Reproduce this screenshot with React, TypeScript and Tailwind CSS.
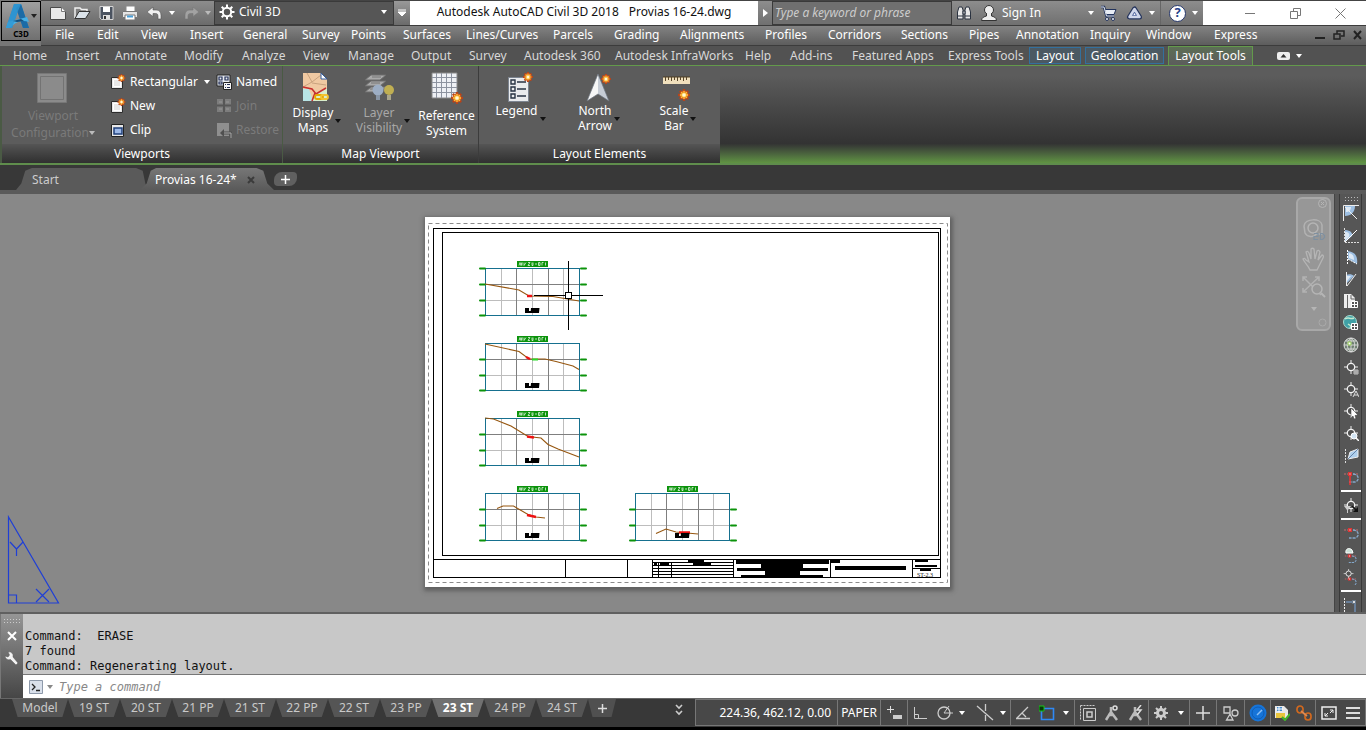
import React from "react";

const menus = [
  ["File", "w-[42px]"], ["Edit", "w-[44px]"], ["View", "w-[49px]"], ["Insert", "w-[53px]"], ["General", "w-[59px]"],
  ["Survey", "w-[49px]"], ["Points", "w-[52px]"], ["Surfaces", "w-[63px]"], ["Lines/Curves", "w-[87px]"], ["Parcels", "w-[61px]"],
  ["Grading", "w-[66px]"], ["Alignments", "w-[85px]"], ["Profiles", "w-[63px]"], ["Corridors", "w-[73px]"], ["Sections", "w-[68px]"],
  ["Pipes", "w-[47px]"], ["Annotation", "w-[74px]"], ["Inquiry", "w-[56px]"], ["Window", "w-[68px]"], ["Express", "w-[60px]"],
];

const ribbonTabs = [
  ["Home", "w-[53px]"], ["Insert", "w-[49px]"], ["Annotate", "w-[69px]"], ["Modify", "w-[58px]"], ["Analyze", "w-[61px]"],
  ["View", "w-[45px]"], ["Manage", "w-[63px]"], ["Output", "w-[58px]"], ["Survey", "w-[55px]"], ["Autodesk 360", "w-[91px]"],
  ["Autodesk InfraWorks", "w-[130px]"], ["Help", "w-[45px]"], ["Add-ins", "w-[62px]"], ["Featured Apps", "w-[96px]"], ["Express Tools", "w-[81px]"],
];

const layoutTabs = ["19 ST", "20 ST", "21 PP", "21 ST", "22 PP", "22 ST", "23 PP", "23 ST", "24 PP", "24 ST"];

function Caret({ className = "" }: { className?: string }) {
  return (
    <svg viewBox="0 0 6 4" className={`h-1 w-1.5 shrink-0 ${className}`} fill="currentColor" aria-hidden="true">
      <path d="M0 0h6L3 4z" />
    </svg>
  );
}

function Burst({ x, y, r = 6 }: { x: number; y: number; r?: number }) {
  return (
    <g transform={`translate(${x} ${y}) scale(${r / 6})`}>
      <path d="M-6 0H6M0-6V6M-4.2-4.2 4.2 4.2M4.2-4.2-4.2 4.2" stroke="#b5441c" strokeWidth="2.4" />
      <circle r="4.4" fill="#d9601c" />
      <path d="M-4 0H4M0-4V4M-2.8-2.8 2.8 2.8M2.8-2.8-2.8 2.8" stroke="#ffc83d" strokeWidth="1.3" />
      <circle r="1.8" fill="#fff8d8" />
    </g>
  );
}

function Svg({ w, h, children, className = "" }: { w: number; h: number; children: React.ReactNode; className?: string }) {
  return (
    <svg width={w} height={h} viewBox={`0 0 ${w} ${h}`} className={`shrink-0 ${className}`} fill="none" aria-hidden="true">
      {children}
    </svg>
  );
}

function QuickAccess() {
  return (
    <div className="flex h-6 w-[173px] items-center bg-linear-to-b from-[#8d8d8d] to-[#6b6b6b] pl-2 text-white">
      <button aria-label="New" className="w-6">
        <Svg w={18} h={18}><path d="M1.500 3.500h11l4 4v8h-15z" fill="#e9e9e9" stroke="#4a4a4a" /><path d="M12.500 3.500v4h4" fill="#fff" stroke="#777" /></Svg>
      </button>
      <button aria-label="Open" className="w-6">
        <Svg w={18} h={18}><path d="M2 14V4h5l1.500 1.500H14V8" stroke="#f0f0f0" strokeWidth="1.500" /><path d="m2 14.500 4-7h11l-4.500 7z" fill="#dbe3ea" stroke="#333" /></Svg>
      </button>
      <button aria-label="Save" className="w-6">
        <Svg w={18} h={18}><path d="M3 2.500h13v13H4.500L3 14z" fill="#4b5360" stroke="#d5d5d5" /><path d="M6 3h7v5H6z" fill="#fff" /><path d="M6 11h7v4H6z" fill="#ddd" /><path d="M7 12h2v3H7z" fill="#333" /></Svg>
      </button>
      <button aria-label="Plot" className="w-6">
        <Svg w={18} h={18}><path d="M5 2h9v6H5z" fill="#fff" stroke="#888" /><path d="M1.500 7.500h15v6h-15z" fill="#e4e4e4" stroke="#777" /><path d="M4 11h10v5H4z" fill="#fff" stroke="#777" /><path d="M6 12.500h6" stroke="#4a9fd8" strokeWidth="2" /></Svg>
      </button>
      <button aria-label="Undo" className="w-6">
        <Svg w={18} h={18}><path d="m2 8 6-5v3h3c3.500 0 5 2 5 5.500V15h-3v-2.500c0-2-.5-3-2.500-3H8v3z" fill="#f0f0f0" stroke="#555" strokeWidth=".6" /></Svg>
      </button>
      <Caret className="mr-2" />
      <button aria-label="Redo" className="w-[22px] text-[#a2a2a2]">
        <Svg w={18} h={18}><path d="m16 8-6-5v3H7c-3.500 0-5 2-5 5.500V15h3v-2.500c0-2 .5-3 2.500-3H10v3z" fill="currentColor" stroke="#777" strokeWidth=".6" /></Svg>
      </button>
      <Caret className="text-[#bbb]" />
    </div>
  );
}

function TitleBar() {
  return (
    <div className="flex h-[25px] items-start border-t border-[#444] bg-white text-[12px]">
      <QuickAccess />
      <div className="flex h-6 w-[180px] items-center gap-1 border border-[#3a3a3a] bg-[#565656] pb-0.5 pl-1 pr-1.5 text-white">
        <Svg w={16} h={16}><circle cx="8" cy="8" r="4.200" stroke="#fff" strokeWidth="2" /><path d="M8 .5v3M8 12.500v3M.5 8h3M12.500 8h3M2.700 2.700l2 2M11.300 11.300l2 2M13.300 2.700l-2 2M4.700 11.300l-2 2" stroke="#fff" strokeWidth="2" /></Svg>
        <button className="flex flex-1 items-center justify-between">Civil 3D<Caret /></button>
      </div>
      <button aria-label="Customize toolbar" className="flex h-6 w-4 items-center justify-center bg-linear-to-b from-[#999] to-[#6b6b6b]">
        <Svg w={8} h={8}><path d="M0 1h8M0 3h8L4 7z" stroke="#fff" fill="#fff" strokeWidth="1" /></Svg>
      </button>
      <div className="flex h-6 flex-1 items-center justify-center gap-2.5 whitespace-nowrap pb-0.5 text-[#111]">
        <span>Autodesk AutoCAD Civil 3D 2018</span><span>Provias 16-24.dwg</span>
      </div>
      <div className="flex h-6 items-center bg-linear-to-b from-[#8d8d8d] to-[#707070] text-white">
        <button aria-label="Collapse search" className="flex w-3.5 justify-center"><Svg w={5} h={8}><path d="M0 0v8l5-4z" fill="#fff" /></Svg></button>
        <input aria-label="Search" placeholder="Type a keyword or phrase" className="h-6 w-[180px] border border-[#3a3a3a] bg-[#707070] px-0.5 pb-0.5 italic text-white outline-none placeholder:text-[#ccc]" />
        <button aria-label="Find" className="flex w-6 justify-center">
          <Svg w={16} h={16}><path d="M3 2h3l1 3v9H1.500V7zM10 2h3l1.500 5v7H9V5z" fill="#e8e8e8" stroke="#2b3340" /><path d="M7 6h2v3H7z" fill="#e8e8e8" stroke="#2b3340" /><path d="M1.500 11H7M9 11h5.500" stroke="#2b3340" /></Svg>
        </button>
        <button className="flex w-[118px] items-center gap-1 pl-1">
          <Svg w={18} h={18}><circle cx="9" cy="6" r="4.500" fill="#eee" stroke="#333" /><path d="M1.500 16.500c0-3 3-4 5-4.500V9.500h5V12c2 .5 5 1.500 5 4.500z" fill="#eee" stroke="#333" /><path d="M7 9h4v3H7z" fill="#eee" /></Svg>
          <span className="flex-1 text-left">Sign In</span><Caret />
        </button>
        <button aria-label="App store" className="flex w-7 justify-center">
          <Svg w={17} h={17}><path d="M1 2h3l2.500 9H14" stroke="#22335c" strokeWidth="2.600" /><path d="M4.500 4.500H16l-2 5H6z" fill="#e8edf5" stroke="#22335c" /><path d="M1 2h3l2.500 9H14" stroke="#dfe6f0" strokeWidth="1" /><circle cx="7" cy="14" r="1.500" fill="#fff" stroke="#22335c" /><circle cx="13" cy="14" r="1.500" fill="#fff" stroke="#22335c" /></Svg>
        </button>
        <button aria-label="Autodesk 360" className="flex w-[38px] items-center gap-1.5 pl-1">
          <Svg w={17} h={16}><path d="m8.500 4-5 8h10z" fill="#5568a0" stroke="#25345c" strokeWidth="5" strokeLinejoin="round" /><path d="m8.500 4-5 8h10z" fill="#5568a0" stroke="#cfd6ea" strokeWidth="2.500" strokeLinejoin="round" /><path d="m8.500 8-1 2h2z" fill="#fff" /></Svg><Caret />
        </button>
        <button aria-label="Help" className="flex h-6 w-[43px] items-center gap-1.5 border-l border-[#666] pl-2">
          <span className="flex size-[17px] items-center justify-center rounded-full border border-[#26376b] bg-white text-[13px] font-bold text-[#26428b]">?</span><Caret />
        </button>
      </div>
      <div className="flex h-6 w-[163px] items-center justify-between pl-[42px] pr-5 text-[#777]">
        <button aria-label="Minimize"><Svg w={10} h={10}><path d="M0 5.500h10" stroke="currentColor" /></Svg></button>
        <button aria-label="Restore"><Svg w={11} h={11}><path d="M.5 3.500h7v7h-7zM3.500 3V.5h7v7H8" stroke="currentColor" /></Svg></button>
        <button aria-label="Close"><Svg w={11} h={11}><path d="m.5.5 10 10M10.500.5l-10 10" stroke="currentColor" /></Svg></button>
      </div>
    </div>
  );
}

function Header() {
  return (
    <header className="flex h-[46px] bg-[#777]">
      <button aria-label="Application menu" className="my-px ml-px flex h-10 w-10 shrink-0 flex-col items-center border border-black bg-linear-to-b from-[#a0a0a0] to-[#707070]">
        <span className="flex items-center">
          <Svg w={26} h={28}>
            <path d="M9 2h7l8 24h-6L13 9 7 26H1z" fill="#2789c7" />
            <path d="m16 2 8 24h-6L11 6z" fill="#1b6ba6" />
            <path d="M3 20 22 15l2 5c-6-2-12-1-17 4l-3 2H1z" fill="#47b0e6" />
            <path d="M9 2h7l-3 7L7 26H1z" fill="#3097d3" opacity=".8" />
            <path d="m8 19 8-2 3 2-7 1z" fill="#164f7c" />
          </Svg>
          <Caret className="text-[#222]" />
        </span>
        <span className="text-[8px] font-bold leading-[8px] text-black">C3D</span>
      </button>
      <div className="flex min-w-0 flex-1 flex-col">
        <TitleBar />
        <nav className="flex h-[21px] items-center border-b border-t border-[#3c3c3c] bg-linear-to-b from-[#838383] to-[#5d5d5d] pb-0.5 pl-3.5 text-[12px] text-white">
          {menus.map(([name, w]) => (
            <button key={name} className={`shrink-0 whitespace-nowrap text-left ${w}`}>{name}</button>
          ))}
          <div className="ml-auto flex items-center gap-2 pr-1 text-[#222]">
            <button aria-label="Minimize drawing"><Svg w={10} h={10}><path d="M0 8h10" stroke="currentColor" strokeWidth="2" /></Svg></button>
            <button aria-label="Restore drawing"><Svg w={12} h={10}><path d="M1 4h6v5H1zM4 4V1h7v5H8" stroke="currentColor" strokeWidth="1.500" /></Svg></button>
            <button aria-label="Close drawing"><Svg w={9} h={10}><path d="m1 1 7 8M8 1 1 9" stroke="currentColor" strokeWidth="2" /></Svg></button>
          </div>
        </nav>
      </div>
    </header>
  );
}

function RibbonTabs() {
  return (
    <div className="flex h-5 items-center border-b border-[#639a4b] bg-[#525252] pl-[13px] text-[12px] text-[#d8d8d8]">
      {ribbonTabs.map(([name, w]) => (
        <button key={name} className={`shrink-0 whitespace-nowrap text-left ${w}`}>{name}</button>
      ))}
      <button className="mr-1 h-[17px] w-[52px] border border-[#33709d] bg-[#4b5963] leading-[14px] text-white">Layout</button>
      <button className="mr-1 h-[17px] w-[79px] whitespace-nowrap border border-[#33709d] bg-[#4b5963] leading-[14px] text-white">Geolocation</button>
      <button className="h-[19px] w-[85px] whitespace-nowrap border border-b-0 border-[#639a4b] bg-linear-to-b from-[#5c6e55] to-[#5c5c5c] text-white">Layout Tools</button>
      <button aria-label="Ribbon display" className="ml-6 flex items-center gap-1.5 text-white">
        <Svg w={13} h={8}><rect width="13" height="8" rx="2" fill="#eee" /><path d="m3.500 5.500 3-3.500 3 3.500z" fill="#333" /></Svg><Caret />
      </button>
    </div>
  );
}

function SheetIcon({ kind }: { kind: "new" | "clip" | "named" | "join" | "restore" }) {
  return (
    <Svg w={16} h={16}>
      {kind === "new" && <><path d="M1.500 3.500h11v11h-11z" fill="#e8e8e8" stroke="#2c2c2c" /><path d="M3.500 5.500h7v7h-7z" stroke="#fff" /><Burst x={11.5} y={4} r={4} /></>}
      {kind === "clip" && <><path d="M1.500 2.500h12v12h-12z" fill="#e8e8e8" stroke="#222" /><path d="M4 6h8v6H4z" fill="#9cb8e8" stroke="#1f3f7a" strokeWidth="1.500" /></>}
      {kind === "named" && <><path d="M1 1h13v11H1z" fill="#e8ecf2" stroke="#222" /><path d="M3 3h3v3H3zM9 3h3v3H9zM3 8h3v2H3z" stroke="#222e55" strokeWidth="1.200" /><path d="M7.500 8.500h8v7h-8z" fill="#f5f5f5" stroke="#222" /><path d="M9 10.500h1M11 10.500h3M9 13.500h1M11 13.500h3" stroke="#222e55" /></>}
      {kind === "join" && <><path d="M1 1h14v13H1z" fill="#7d7d7d" /><path d="M1 7.500h14M8 1v13" stroke="#575757" strokeWidth="2" /><path d="M3 4h3M10 4h3M3 11h3M10 11h3" stroke="#999" /></>}
      {kind === "restore" && <><path d="M1 1h12v13H1z" fill="#8f8f8f" /><path d="m4 11 4-4v8z" fill="#505050" /><path d="M7 11h8v5" stroke="#505050" strokeWidth="3" /><path d="M8 11h7v5" stroke="#aaa" /></>}
    </Svg>
  );
}

function SmallTool({ kind, label, disabled, caret }: { kind: "new" | "clip" | "named" | "join" | "restore"; label: string; disabled?: boolean; caret?: boolean }) {
  return (
    <button disabled={disabled} className="flex h-6 items-center gap-1 text-white disabled:text-[#7b7b7b]">
      <SheetIcon kind={kind} /><span className="whitespace-nowrap">{label}</span>{caret && <Caret className="ml-0.5" />}
    </button>
  );
}

function PanelTitle({ children }: { children: string }) {
  return <div className="h-[19px] bg-linear-to-b from-[#555] to-[#303030] text-center leading-[20px] text-white">{children}</div>;
}

function BigTool({ icon, lines, width, disabled, caret = true, low }: { icon: React.ReactNode; lines: string[]; width: string; disabled?: boolean; caret?: boolean; low?: boolean }) {
  return (
    <button disabled={disabled} className={`flex shrink-0 flex-col items-center text-white disabled:text-[#a8a8a8] ${low ? "gap-1" : ""} ${width}`}>
      {icon}
      <span className="relative block whitespace-nowrap text-center leading-[15px]">
        {lines.map((l) => <span key={l} className="block">{l}</span>)}
        {caret && <Caret className="absolute -right-2 top-3.5 text-[#111]" />}
      </span>
    </button>
  );
}

function Ribbon() {
  return (
    <section aria-label="Ribbon" className="flex h-[99px] border-b-2 border-[#5f8d4c] bg-linear-to-b from-[#5c5c5c] from-10% via-[#333] via-80% to-[#609442] text-[12px]">
      <div className="flex w-[283px] flex-col border-l-2 border-r border-[#4a5a44] bg-[#5c5c5c]">
        <div className="flex flex-1 pt-1">
          <button disabled className="flex w-[98px] flex-col items-center gap-0.5 pl-1 text-[#7a7a7a]">
            <Svg w={32} h={36}><path d="M.5 3.500h29v29H.5z" fill="#8b8b8b" stroke="#777" /><path d="M3.500 6.500h23v23h-23z" stroke="#737373" /></Svg>
            <span className="leading-[15px]">Viewport</span>
            <span className="flex items-center leading-[15px]">Configuration<Caret className="text-[#bbb]" /></span>
          </button>
          <div className="ml-2.5 w-[106px]">
            <SmallTool kind="new" label="Rectangular" caret />
            <SmallTool kind="new" label="New" />
            <SmallTool kind="clip" label="Clip" />
          </div>
          <div>
            <SmallTool kind="named" label="Named" />
            <SmallTool kind="join" label="Join" disabled />
            <SmallTool kind="restore" label="Restore" disabled />
          </div>
        </div>
        <PanelTitle>Viewports</PanelTitle>
      </div>
      <div className="flex w-[196px] flex-col border-r border-[#3c3c3c] bg-[#5c5c5c]">
        <div className="flex flex-1 pt-1.5">
          <BigTool width="w-[60px]" lines={["Display", "Maps"]} icon={
            <Svg w={32} h={33}><path d="M6 1h18l6 6v22H6z" fill="#f0c9a2" /><path d="M6 17h6l4 12H6z" fill="#b8e4e5" /><path d="m18 22 12-6v13H15z" fill="#d8eecb" /><path d="m10 1 5 9-9 5m9-5 9-7M15 11l14 2" stroke="#c9a27e" /><path d="m6 15 9 2 4 5 10-6M18 21l-3 8" stroke="#c62f2f" strokeWidth="1.600" /><path d="M24 1v6h6z" fill="#fff" stroke="#315a9b" /><rect x="18" y="23" width="8" height="4" rx="2" stroke="#e5a900" strokeWidth="1.800" /><rect x="24" y="23" width="7" height="4" rx="2" stroke="#f4c430" strokeWidth="1.800" /></Svg>} />
          <BigTool width="w-[72px]" disabled lines={["Layer", "Visibility"]} icon={
            <Svg w={32} h={33}><path d="M8 3h15l-6 5H2zM8 9h15l-6 5H2zM8 15h15l-6 5H2z" fill="#a9a9a9" stroke="#6d6d6d" /><path d="M9 5h9M8 11h9M7 17h9" stroke="#777" /><circle cx="15" cy="18" r="5.500" fill="#9daec4" /><path d="M13 23h4v5h-4z" fill="#8996a6" /><circle cx="26" cy="18" r="5" fill="#c0af52" /><path d="M24 23h4v5h-4z" fill="#aaa68b" /></Svg>} />
          <BigTool width="w-[63px]" low lines={["Reference", "System"]} caret={false} icon={
            <Svg w={32} h={32}><path d="M1 1h25v25H1z" fill="#eef0f5" stroke="#888" /><path d="M5.500 1v25M10.500 1v25M15.500 1v25M20.500 1v25M1 5.500h25M1 10.500h25M1 15.500h25M1 20.500h25" stroke="#8d93a0" /><Burst x={26} y={26} r={6} /></Svg>} />
        </div>
        <PanelTitle>Map Viewport</PanelTitle>
      </div>
      <div className="flex w-[241px] flex-col bg-[#5c5c5c]">
        <div className="flex flex-1 pl-0.5 pt-1">
          <BigTool width="w-[71px]" lines={["Legend"]} icon={
            <Svg w={32} h={33}><path d="M7.500 7.500h20v24h-20z" fill="#e9ebee" stroke="#7c8490" /><path d="M10 10h4v4h-4zM10 17h4v4h-4zM10 24h4v4h-4z" stroke="#273344" strokeWidth="1.400" /><path d="M16 12h9M16 19h9M16 26h9" stroke="#273344" strokeWidth="1.400" /><Burst x={27} y={7} r={5} /></Svg>} />
          <BigTool width="w-[86px]" lines={["North", "Arrow"]} icon={
            <Svg w={32} h={33}><path d="M19 4 8 31l11-7z" fill="#f6f6f6" /><path d="m19 4 11 27-11-7z" fill="#c6ccd5" /><path d="M19 4 8 31l11-7 11 7z" stroke="#6c7480" strokeWidth=".7" /><Burst x={27} y={9} r={5} /></Svg>} />
          <BigTool width="w-[72px]" lines={["Scale", "Bar"]} icon={
            <Svg w={36} h={33}><path d="M7 7h27v7H7z" fill="#f0e0bd" /><path d="M7 7h27" stroke="#4a3b21" /><path d="M9.500 7v4M12.500 7v3M15.500 7v4M18.500 7v3M21.500 7v4M24.500 7v3M27.500 7v4M30.500 7v3" stroke="#5a472a" /><Burst x={28} y={25} r={6} /></Svg>} />
        </div>
        <PanelTitle>Layout Elements</PanelTitle>
      </div>
    </section>
  );
}

function DocumentTabs() {
  return (
    <div className="flex h-[29px] items-end border-b-4 border-[#5a5a5a] bg-[#383838] pl-4 text-[12px]">
      <button className="h-[22px] w-[132px] bg-[#5a5a5a] pl-4 pt-0.5 text-left text-[#ccc] [clip-path:polygon(0_100%,4%_70%,7%_12%,12%_0,91%_0,96%_12%,98%_70%,100%_100%)]">Start</button>
      <div className="-ml-2 flex h-[22px] w-[134px] items-center bg-linear-to-b from-[#777] to-[#5a5a5a] pt-0.5 text-white [clip-path:polygon(0_100%,5%_70%,8%_12%,12%_0,87%_0,92%_12%,95%_70%,100%_100%)]">
        <button className="w-[107px] pl-[15px] text-left">Provias 16-24*</button>
        <button aria-label="Close Provias 16-24" className="text-[#3b3b3b]"><Svg w={8} h={8}><path d="m1 1 6 6M7 1 1 7" stroke="currentColor" strokeWidth="2" /></Svg></button>
      </div>
      <button aria-label="New drawing tab" className="mb-1 flex h-[14px] w-[23px] items-center justify-center rounded-lg rounded-tr-sm rounded-bl-sm bg-[#606060] text-white">
        <Svg w={9} h={9}><path d="M4.500 0v9M0 4.500h9" stroke="currentColor" strokeWidth="1.500" /></Svg>
      </button>
    </div>
  );
}

interface Section { x: number; y: number; line: string; top?: boolean; mark: string; green?: string }

const sections: Section[] = [
  { x: 485, y: 268, top: true, line: "0,16 34,22 44,28 68,28.5 94,33", mark: "M42 28h5" },
  { x: 485, y: 343, line: "0,1 34,8.5 44,16 60,16 71,18.500 88,23 94,26.500", mark: "M41 14l4 2", green: "M47 16.500h6" },
  { x: 485, y: 418, line: "0,0 8.500,1 26,8 43,18.500 56,20 63,26.500 73,31 94,39", mark: "M42 18.500l7 1" },
  { x: 485, y: 493, line: "12,15.500 18,13 28.500,13 43,21.500 51,24 60,25", mark: "M42 22l9 2" },
  { x: 635, y: 493, line: "21,40.500 31,36 41,39 63,41", mark: "M44 39.500h11" },
];

function CrossSection({ x, y, line, top, mark, green }: Section) {
  return (
    <g transform={`translate(${x} ${y})`}>
      <path d="M32-7h31v6H32z" fill="#0b930b" />
      <path d="M34-2.500l1-3 1 3 1-3v3M39-5.500v3l2-3M43-5.500h2l-2 3h2M47-5.500v3h1v-3M50-4h2M53.500-5.500v3h1.500v-3zM57-2.500v-3h1.500M60.500-5.500v3" stroke="#e2f5e2" strokeWidth=".8" />
      <path d="M16.500 0v47M47.500 0v47M78.500 0v47M0 32.500h94" stroke="#bdbdbd" shapeRendering="crispEdges" />
      <path d="M31.500 0v47M63.500 0v47M0 16.500h94" stroke="#7f7f7f" shapeRendering="crispEdges" />
      <path d="M.5.5h94v47H.5z" fill="none" stroke="#16708f" shapeRendering="crispEdges" />
      <path d={`${top ? "M-5 .5h5M96 .5h5" : ""}M-5 16.500h5M96 16.500h5M-5 32.500h5M96 32.500h5M-5 47.500h5M96 47.500h5`} stroke="#0b930b" strokeWidth="2" strokeLinecap="round" />
      <polyline points={line} fill="none" stroke="#96560f" strokeWidth="1.100" />
      <path d={mark} stroke="#ee1111" strokeWidth="2.500" />
      {green && <path d={green} stroke="#28d828" strokeWidth="2" />}
      <path d="M40 40h4v5h-4zM44 43h2v2h-2zM46 40h8.500l-.5 5h-8.500z" fill="#000" />
    </g>
  );
}

function DrawingSheet() {
  return (
    <svg viewBox="425 217 525 370" role="img" aria-label="Cross section sheet" className="absolute left-[425px] top-[23px] h-[370px] w-[525px] bg-white shadow-[1px_2px_4px_2px_rgba(80,80,80,0.7)]" fill="none">
      <path d="M428.500 223.500h519v359h-519z" stroke="#8a8a8a" strokeDasharray="4 3" />
      <g stroke="#000" shapeRendering="crispEdges">
        <path d="M433.500 228.500h507v349h-507zM442.500 232.500h496v323h-496zM433 559.500h507" />
        <path d="M565.500 559v18M627.500 559v18M652.500 559v18M733.500 559v18M830.500 559v18M912.500 559v18M658.500 562v15M671.500 562v15M652 562.500h81M652 565.500h81M652 568.500h81M652 571.500h81M652 574.500h81M912 568.500h28" />
      </g>
      <path d="M688 560h16v2h-16zM693 563h18v2h-18zM654 563h3v2h-3zM660 563h9v2h-9zM736 560h93v4h-93zM761 564h42v4h-42zM737 568h91v3h-91zM765 571h35v4h-35zM741 575h82v2h-82zM831 560h9v3h-9zM835 566h71v4h-71zM915 560h13v2h-13zM915 565h22v2h-22zM920 569h11v2h-11z" fill="#000" />
      <text x="917" y="577" fontSize="6" fontFamily="Liberation Serif, serif" fill="#111">ST-2.3</text>
      {sections.map((s) => <CrossSection key={`${s.x}-${s.y}`} {...s} />)}
      <path d="M534 295.500h69M568.500 261v69" stroke="#000" shapeRendering="crispEdges" />
      <path d="M565.500 292.500h6v6h-6z" fill="#fff" stroke="#000" shapeRendering="crispEdges" />
    </svg>
  );
}

function UcsIcon() {
  return (
    <Svg w={54} h={90} className="absolute bottom-[7px] left-[6px]">
      <path d="M2.500 2v86h50zM2.500 80h8v8" stroke="#1f3fd6" strokeWidth="1.200" />
      <path d="m4 27 6.500 7 6.500-7M10.500 34v7M30 74l13 13M43 74 30 87" stroke="#1f3fd6" strokeWidth="1.200" />
    </Svg>
  );
}

function NavigationBar() {
  return (
    <div className="absolute right-[35px] top-[3px] flex h-[134px] w-[35px] flex-col items-center rounded-md border-2 border-[#a8a8a8] bg-[#979797] text-[#b5b5b5]">
      <button aria-label="Close navigation bar" className="mr-0.5 self-end"><Svg w={9} h={9}><circle cx="4.500" cy="4.500" r="4" stroke="currentColor" /><path d="m3 3 3 3M6 3 3 6" stroke="currentColor" /></Svg></button>
      <button aria-label="Steering wheel" className="mt-2"><Svg w={26} h={28}><path d="M3 10C4 2 20 2 21 9v9h-6c-2 4-9 3-11-1z" stroke="#b2b2b2" strokeWidth="1.500" /><circle cx="12" cy="12" r="5" stroke="#b5b5b5" strokeWidth="1.500" /><path d="M13 17.500h4v3h-4v3h4M19.500 17.500v6h2l2-2v-2l-2-2z" stroke="#7f90a0" strokeWidth="1.200" /></Svg></button>
      <button aria-label="Pan" className="mt-0.5"><Svg w={26} h={28}><path d="M9 24c-2-5-6-8-7-11 1-1 2-1 3 1l3 2L5 6c1-1 2-1 3 1l2 6V3c1-1 2-1 3 0l1 10 2-8c1-1 2-1 3 1l-2 8 4-5c1 0 2 1 1 3l-4 8-2 4z" stroke="currentColor" strokeWidth="1.300" /></Svg></button>
      <button aria-label="Zoom"><Svg w={28} h={25}><path d="m3 3 18 18M19 3 3 18M3 7V3h4M19 7V3h-4M3 14v4h4" stroke="#b2b2b2" strokeWidth="1.500" /><circle cx="17" cy="15" r="5" fill="#979797" stroke="#b5b5b5" strokeWidth="1.500" /><path d="m21 19 4 4" stroke="#b5b5b5" strokeWidth="2" /></Svg></button>
      <Caret className="mt-2" />
      <button aria-label="Navigation options" className="mb-0.5 mr-0.5 mt-auto self-end"><Svg w={9} h={9}><circle cx="4.500" cy="4.500" r="3.500" stroke="#aaa" /></Svg></button>
    </div>
  );
}

const target = <><path d="M8 1v14M1 8h14" stroke="#eee" /><circle cx="8" cy="8" r="3.700" fill="#505050" stroke="#f2f2f2" strokeWidth="1.300" /></>;
const curve = <><path d="M1 5h14" stroke="#c86a6a" strokeDasharray="2 1" /><path d="M10 5c6 0 7 7 2 8H6" stroke="#84a7ca" strokeWidth="1.300" strokeDasharray="3 1" /><path d="M5 3h4v4H5z" fill="#db3434" /><path d="M6.500 4.500h1v1h-1z" fill="#fff" /></>;

const sideTools: { name: string; art?: React.ReactNode }[] = [
  { name: "Polygon corner", art: <><path d="M2 1h10c0 6-4 10-10 10z" fill="#9dbfe2" /><path d="M3 2h5c0 3-2 5-5 5z" fill="#dce9f5" /><path d="M.5 16V.5H16M2 2l12 12" stroke="#eee" /></> },
  { name: "Angle distance", art: <><path d="M2 3c6 0 8 4 7 6l-7 6z" fill="#9dbfe2" /><path d="M2 5c4 0 5 2 4 5l-4 4z" fill="#dce9f5" /><path d="M1.500 1v14.500H16" stroke="#ddd" strokeDasharray="2 1" /><path d="M2 15 14 3" stroke="#fff" /></> },
  { name: "Bearing distance", art: <><path d="M5 2c7 1 10 5 9 13L5 10z" fill="#9dbfe2" /><path d="M6 4c4 1 5 3 5 7L6 9z" fill="#dce9f5" /><path d="M4.500 1v14M5 10l9 5" stroke="#fff" strokeDasharray="2 1" /></> },
  { name: "Azimuth", art: <><path d="M3 4c3-1 6-1 8 1l-8 8z" fill="#9dbfe2" /><path d="M4 5h4l-4 5z" fill="#dce9f5" /><path d="M3.500 1v14M4 15 13 3" stroke="#eee" /></> },
  { name: "Northing easting", art: <><path d="M1 1h7l4 4v10H1z" fill="#eee" /><path d="M4.500 2v13M8 2v4h4" stroke="#666" /><path d="M8.500 8.500h6v6h-6z" fill="#555" stroke="#fff" /><path d="M11.500 9v6M8 11.500h6" stroke="#fff" /></> },
  { name: "Grid northing", art: <><circle cx="7" cy="7" r="6.500" fill="#3fa0a5" stroke="#a8d9ce" /><path d="M2 4c4-3 5 1 9-1M5 9l3 2-1 2" stroke="#c4ead1" strokeWidth="1.500" /><path d="M8.500 8.500h6v6h-6z" fill="#555" stroke="#fff" /><path d="M11.500 9v6M8 11.500h6" stroke="#fff" /></> },
  { name: "Latitude longitude", art: <><circle cx="8" cy="8" r="7" fill="#6f7f72" stroke="#e5e5e5" /><path d="M1 8h14M3 4h10M3 12h10M8 1v14M8 1c-5 4-5 10 0 14M8 1c5 4 5 10 0 14" stroke="#dcdcdc" strokeWidth=".9" /><path d="M5 5h3v3H5z" fill="#fff" stroke="#8bc34a" /></> },
  { name: "Point number", art: <>{target}<path d="M10 12h6M10 14h6M12 10v6M14 10v6" stroke="#ddd" strokeWidth=".8" /></> },
  { name: "Point name", art: <>{target}<path d="m10 16 3-6 3 6M11 14h4" stroke="#ddd" /></> },
  { name: "Point object", art: <>{target}<path d="m8 5 7 7-3 .5 1 3-2 .5-1-3-2 2z" fill="#fff" stroke="#333" strokeWidth=".5" /></> },
  { name: "Zoom to point", art: <>{target}<circle cx="11" cy="11" r="3" fill="#d4e6f5" stroke="#fff" /><path d="m13 13 3 3" stroke="#fff" strokeWidth="1.500" /></> },
  { name: "Side shot", art: <><path d="M2.500 2v14" stroke="#ddd" strokeDasharray="2 1" /><path d="m5 12 2-7 8-3v8z" fill="#afd0ed" stroke="#eee" /><path d="M5 12 15 2" stroke="#6583aa" /></> },
  { name: "Station offset", art: <>{curve}<path d="M7 6v10" stroke="#e33" strokeWidth="1.500" /></> },
  { name: "sep1" },
  { name: "Point filter", art: <>{target}<path d="M1 9h7l-3 4v3H4v-3z" fill="#ccc" /><path d="m9 9 5 5" stroke="#111" strokeWidth="1.500" /><path d="M15 10v5h-5z" fill="#111" /></> },
  { name: "sep2" },
  { name: "Curve through point", art: curve },
  { name: "Cloud transparent", art: <><g transform="translate(1 5) scale(.8)">{curve}</g><path d="M3 6c-1-4 3-6 6-3l1 3z" fill="#c9dfd5" stroke="#fff" /></> },
  { name: "Curve target", art: <><g transform="translate(1 6) scale(.8)">{curve}</g><g transform="translate(0 -1) scale(.7)">{target}</g></> },
  { name: "sep3" },
  { name: "Profile station", art: <><path d="M1.500 1v15" stroke="#eee" strokeDasharray="2 1" /><path d="M3 5h9v10" stroke="#7aa8df" /><path d="M9.500 3.500h3v3h-3z" fill="#ddd" stroke="#678" /></> },
];

function SideToolbar() {
  return (
    <aside aria-label="Transparent commands" className="absolute bottom-0 right-0 top-0 w-8 overflow-hidden border-l border-[#444] bg-[#565656] px-1">
      <div className="flex flex-col items-center border-x border-[#393939]">
        <div className="mt-0.5 h-1.5 w-3.5 shrink-0 bg-[radial-gradient(#bbb_1px,transparent_1px)] bg-[length:3px_3px]" />
        {sideTools.map((t) => t.art
          ? <button key={t.name} aria-label={t.name} className="flex h-[22px] shrink-0 items-center"><Svg w={16} h={16}>{t.art}</Svg></button>
          : <hr key={t.name} className="my-0.5 h-0.5 w-5 shrink-0 border-0 bg-white" />)}
      </div>
    </aside>
  );
}

function CommandLine() {
  return (
    <section aria-label="Command line" className="flex h-[86px] border-t-2 border-[#606060] bg-[#c8c8c8] font-['DejaVu_Sans_Mono',monospace] text-[12px]">
      <div className="flex w-[23px] shrink-0 flex-col items-center border-l border-[#777] bg-linear-to-b from-[#969696] to-[#464646] pt-1 text-white">
        <div className="h-1.5 w-[18px] bg-[radial-gradient(#ccc_1px,transparent_1px)] bg-[length:3px_3px]" />
        <button aria-label="Close command line" className="mt-[7px]"><Svg w={10} h={10}><path d="m1 1 8 8M9 1 1 9" stroke="currentColor" strokeWidth="2" /></Svg></button>
        <button aria-label="Customize" className="mt-2.5"><Svg w={14} h={15}><path d="M3 1a4 4 0 0 1 5 5l5 6-2 2-5.500-5.500A4 4 0 0 1 0 5l3 1 1.500-2z" fill="#f2f2f2" stroke="#555" strokeWidth=".5" /></Svg></button>
      </div>
      <div className="flex min-w-0 flex-1 flex-col">
        <pre className="h-[60px] pl-0.5 pt-[15px] font-['DejaVu_Sans_Mono',monospace] leading-[15px] text-[#111]">{"Command:  ERASE\n7 found\nCommand: Regenerating layout."}</pre>
        <div className="flex flex-1 items-center gap-1 border-t border-[#777] bg-white pl-1.5">
          <Svg w={14} h={14}><path d="M.5.5h13v13H.5z" fill="#d9e0eb" stroke="#8d99aa" /><path d="m3 4 3 3-3 3M7 10.500h4" stroke="#222" strokeWidth="1.300" /></Svg>
          <Caret className="text-[#888]" />
          <input aria-label="Command" placeholder="Type a command" className="min-w-0 flex-1 pl-0.5 italic outline-none placeholder:text-[#888]" />
        </div>
      </div>
    </section>
  );
}

function StatusIcon({ name, width, children, divide }: { name: string; width: string; children: React.ReactNode; divide?: boolean }) {
  return (
    <button aria-label={name} className={`flex h-full shrink-0 items-center justify-center ${width} ${divide ? "border-l border-[#777]" : ""}`}>{children}</button>
  );
}

function StatusBar() {
  return (
    <footer className="flex h-[29px] shrink-0 border-t border-[#666] bg-[#383838] text-[12px] text-[#c9c9c9]">
      <div className="flex items-start pl-3">
        <button className="h-[18px] w-14 bg-[#555] leading-[16px] [clip-path:polygon(0_0,100%_0,90%_100%,10%_100%)]">Model</button>
        {layoutTabs.map((t) => (
          <button key={t} className={`h-[18px] w-[52px] whitespace-nowrap leading-[16px] [clip-path:polygon(0_0,100%_0,88%_100%,12%_100%)] ${t === "23 ST" ? "bg-[#707070] font-bold text-white" : "bg-[#555]"}`}>{t}</button>
        ))}
        <button aria-label="New layout" className="flex h-[18px] w-7 items-center justify-center bg-[#505050] [clip-path:polygon(0_0,100%_0,84%_100%,16%_100%)]"><Svg w={9} h={9}><path d="M4.500 0v9M0 4.500h9" stroke="#ddd" strokeWidth="1.500" /></Svg></button>
      </div>
      <div className="ml-auto flex h-[27px] items-center">
        <StatusIcon name="More layouts" width="w-8"><Svg w={8} h={20}><path d="m1 2 3 3 3-3M1 8l3 3 3-3" stroke="#ccc" strokeWidth="1.600" /></Svg></StatusIcon>
        <div className="flex h-full items-center border border-[#777] bg-[#484848]">
          <div className="w-[141px] whitespace-nowrap pr-1.5 text-right text-white">224.36, 462.12, 0.00</div>
          <button className="h-full w-[43px] border-l border-[#777] text-white">PAPER</button>
          <StatusIcon name="Infer constraints" width="w-[27px]" divide><Svg w={16} h={16}><path d="M4.500 1v7M1 4.500h7" stroke="#ddd" /><path d="M7 10h9v4H7z" fill="#ccc" /></Svg></StatusIcon>
          <StatusIcon name="Ortho mode" width="w-[24px]" divide><Svg w={16} h={16}><path d="M2.500 2v11.500H15M2.500 9.500h4v4" stroke="#ccc" /></Svg></StatusIcon>
          <StatusIcon name="Polar tracking" width="w-[40px]"><Svg w={16} h={16}><circle cx="7" cy="8" r="6" stroke="#ccc" strokeWidth="1.300" /><path d="M7 8h9M7 8l5-7" stroke="#ccc" /></Svg><Caret className="ml-1.5 text-white" /></StatusIcon>
          <StatusIcon name="Isometric drafting" width="w-[39px]"><Svg w={18} h={18}><path d="m1 2 16 14M9.500 0v7M9.500 11v6" stroke="#ccc" strokeWidth="1.300" /></Svg><Caret className="ml-1.5 text-white" /></StatusIcon>
          <StatusIcon name="Object snap tracking" width="w-[24px]" divide><Svg w={16} h={16}><path d="M1 13.500h14M2 13 13 2M7 8l4 4" stroke="#ccc" strokeWidth="1.300" /></Svg></StatusIcon>
          <StatusIcon name="Object snap" width="w-[40px]"><Svg w={16} h={16}><path d="M2.500 3.500h12v11h-12z" stroke="#2f89f5" strokeWidth="1.600" /><path d="M0 1h5v5H0z" fill="#063b09" stroke="#18c51b" /></Svg><Caret className="ml-2 text-white" /></StatusIcon>
          <StatusIcon name="Selection cycling" width="w-[26px]" divide><Svg w={16} h={16}><path d="M.5.500h15M.5.500v15" stroke="#ccc" strokeDasharray="2 1" /><path d="M3.500 3.500h12v12h-12z" stroke="#ccc" /><path d="M7 7h5v5H7z" stroke="#ccc" strokeWidth="1.500" /></Svg></StatusIcon>
          {["Annotation visibility", "Auto scale"].map((n, i) => (
            <StatusIcon key={n} name={n} width="w-[24px]"><Svg w={16} h={16}><path d="M7 2v5L2 15m5-8 6 8M4 10h6" stroke="#bbb" strokeWidth="2.500" />{i === 0 ? <circle cx="11" cy="3" r="2" stroke="#ddd" strokeWidth="1.500" /> : <path d="M13 0 9 5h4l-4 5" stroke="#ddd" strokeWidth="1.500" />}</Svg></StatusIcon>
          ))}
          <StatusIcon name="Workspace" width="w-[41px]" divide><Svg w={14} h={14}><circle cx="7" cy="7" r="3.500" stroke="#ccc" strokeWidth="3" /><path d="M7 0v3M7 11v3M0 7h3M11 7h3M2 2l2 2M10 10l2 2M12 2l-2 2M4 10l-2 2" stroke="#ccc" strokeWidth="2" /></Svg><Caret className="ml-2.5 text-white" /></StatusIcon>
          <StatusIcon name="Annotation monitor" width="w-[27px]" divide><Svg w={14} h={14}><path d="M7 0v14M0 7h14" stroke="#ddd" strokeWidth="1.500" /></Svg></StatusIcon>
          <StatusIcon name="Isolate objects" width="w-[28px]" divide><Svg w={16} h={16}><path d="M1 2h6v6H1zM3.500 15 7 9l3 6z" stroke="#ccc" strokeWidth="1.300" /><circle cx="12" cy="8" r="3" stroke="#ccc" strokeWidth="1.300" /></Svg></StatusIcon>
          <StatusIcon name="Hardware acceleration" width="w-[26px]" divide><Svg w={18} h={18}><circle cx="9" cy="9" r="8.500" fill="#1674d8" /><circle cx="9" cy="9" r="6" stroke="#0f5cb4" /><path d="m8 11 5-5" stroke="#8cc0f5" strokeWidth="1.500" /></Svg></StatusIcon>
          <StatusIcon name="Drawing status" width="w-[23px]" divide><Svg w={16} h={16}><path d="M1 1h9l4 4v8H1z" fill="#e8e8e8" /><path d="M2 8h9v5H2z" fill="#e9c53d" /><path d="M3 2h5v4H3z" fill="#438bd0" /><path d="M5 1v6M1 4h8" stroke="#fff" /><path d="m8 12 3 3 5-6" stroke="#41b52b" strokeWidth="2" /></Svg></StatusIcon>
          <StatusIcon name="Links" width="w-[22px]"><Svg w={16} h={16}><rect x="1" y="1" width="6" height="7" rx="3" stroke="#d2691e" strokeWidth="1.700" /><rect x="9" y="8" width="6" height="7" rx="3" stroke="#d2691e" strokeWidth="1.700" /><path d="m5 6 6 5" stroke="#df8950" strokeWidth="1.700" /></Svg></StatusIcon>
          <StatusIcon name="Clean screen" width="w-[26px]" divide><Svg w={16} h={14}><path d="M1 1h14v12H1z" stroke="#eee" strokeWidth="1.500" /><path d="M4 10l3-3M4 7v3h3M12 4 9 7M9 4h3v3" stroke="#eee" /></Svg></StatusIcon>
          <StatusIcon name="Customization" width="w-[24px]"><Svg w={16} h={14}><path d="M1 2h14M1 7h14M1 12h14" stroke="#ddd" strokeWidth="2" /></Svg></StatusIcon>
        </div>
      </div>
    </footer>
  );
}

export default function App() {
  return (
    <div className="flex h-screen flex-col overflow-hidden border-b-3 border-black bg-[#383838] font-['Noto_Sans',sans-serif]">
      <Header />
      <RibbonTabs />
      <Ribbon />
      <DocumentTabs />
      <main className="relative min-h-0 flex-1 overflow-hidden bg-[#888]">
        <DrawingSheet />
        <UcsIcon />
        <NavigationBar />
        <SideToolbar />
      </main>
      <CommandLine />
      <StatusBar />
    </div>
  );
}
